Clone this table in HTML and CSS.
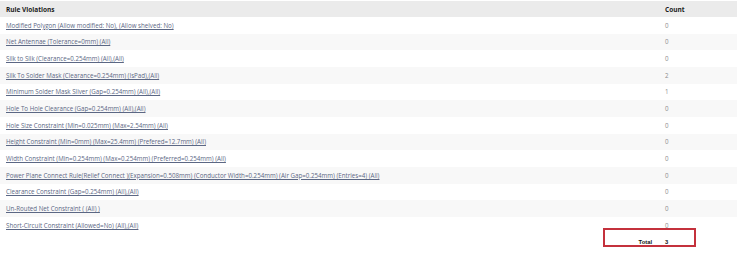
FILE: index.html
```html
<!DOCTYPE html>
<html>
<head>
<meta charset="utf-8">
<link rel="stylesheet" href="styles.css">
</head>
<body>
<div class="wrap">
<table class="report">
  <thead>
    <tr class="head"><th class="rule">Rule Violations</th><th class="count">Count</th></tr>
  </thead>
  <tbody>
    <tr><td class="rule"><a href="#">Modified Polygon (Allow modified: No), (Allow shelved: No)</a></td><td class="count">0</td></tr>
    <tr><td class="rule"><a href="#">Net Antennae (Tolerance=0mm) (All)</a></td><td class="count">0</td></tr>
    <tr><td class="rule"><a href="#">Silk to Silk (Clearance=0.254mm) (All),(All)</a></td><td class="count">0</td></tr>
    <tr><td class="rule"><a href="#">Silk To Solder Mask (Clearance=0.254mm) (IsPad),(All)</a></td><td class="count">2</td></tr>
    <tr><td class="rule"><a href="#">Minimum Solder Mask Sliver (Gap=0.254mm) (All),(All)</a></td><td class="count">1</td></tr>
    <tr><td class="rule"><a href="#">Hole To Hole Clearance (Gap=0.254mm) (All),(All)</a></td><td class="count">0</td></tr>
    <tr><td class="rule"><a href="#">Hole Size Constraint (Min=0.025mm) (Max=2.54mm) (All)</a></td><td class="count">0</td></tr>
    <tr><td class="rule"><a href="#">Height Constraint (Min=0mm) (Max=25.4mm) (Prefered=12.7mm) (All)</a></td><td class="count">0</td></tr>
    <tr><td class="rule"><a href="#">Width Constraint (Min=0.254mm) (Max=0.254mm) (Preferred=0.254mm) (All)</a></td><td class="count">0</td></tr>
    <tr><td class="rule"><a href="#">Power Plane Connect Rule(Relief Connect )(Expansion=0.508mm) (Conductor Width=0.254mm) (Air Gap=0.254mm) (Entries=4) (All)</a></td><td class="count">0</td></tr>
    <tr><td class="rule"><a href="#">Clearance Constraint (Gap=0.254mm) (All),(All)</a></td><td class="count">0</td></tr>
    <tr><td class="rule"><a href="#">Un-Routed Net Constraint ( (All) )</a></td><td class="count">0</td></tr>
    <tr><td class="rule"><a href="#">Short-Circuit Constraint (Allowed=No) (All),(All)</a></td><td class="count">0</td></tr>
  </tbody>
  <tfoot>
    <tr class="total"><td class="rule total-label">Total</td><td class="count total-value">3</td></tr>
  </tfoot>
</table>
<div class="highlight"></div>
</div>
</body>
</html>
```

FILE: styles.css
```css
html, body {
  margin: 0;
  padding: 0;
  background: #ffffff;
}

body {
  font-family: "Open Sans", "Noto Sans", "Liberation Sans", sans-serif;
  font-size: 6.2px;
  color: #333333;
}

.wrap {
  position: relative;
  padding-top: 1px;
  width: 737px;
}

.report {
  width: 737px;
  border-collapse: collapse;
  table-layout: fixed;
}

.report th,
.report td {
  padding: 0 6px;
  text-align: left;
  vertical-align: middle;
  white-space: nowrap;
}

.report .rule {
  width: 647px;
}

.report .count {
  width: 66px;
}

.head {
  height: 16px;
  background: #ebebeb;
}

.head th {
  font-family: "Open Sans", "Liberation Sans", sans-serif;
  font-weight: 700;
  font-size: 6.5px;
  color: #1a1a1a;
}

tbody tr {
  height: 16.67px;
}

tbody tr:nth-child(even) {
  background: #f8f8f8;
}

tbody a {
  color: #5b6784;
  text-decoration: underline;
}

tbody .count {
  color: #8c8c8c;
}

.total {
  height: 16.67px;
}

.total td {
  font-family: "Liberation Sans", Arial, sans-serif;
  font-weight: 700;
  font-size: 5.8px;
  color: #111111;
}

.total .total-label {
  text-align: right;
  padding-right: 7px;
}

.highlight {
  position: absolute;
  left: 603px;
  top: 228px;
  width: 89px;
  height: 15px;
  border: 2px solid #c4313c;
}
```
